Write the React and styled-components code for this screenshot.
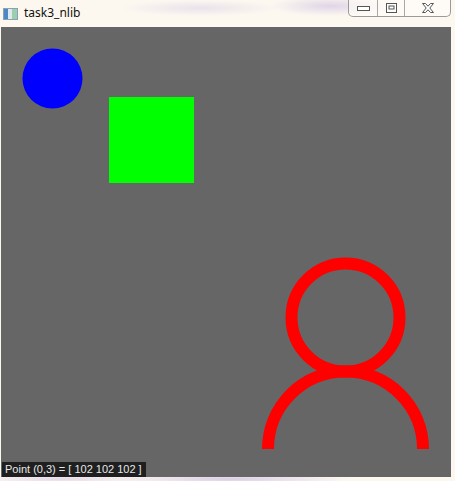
import React from "react";
import styled, { createGlobalStyle } from "styled-components";

const Global = createGlobalStyle`
  html, body { margin: 0; padding: 0; background: #fbf7ef; }
  body { width: 455px; height: 481px; overflow: hidden; }
`;

const Window = styled.div`
  width: 455px;
  height: 481px;
  display: flex;
  flex-direction: column;
  background:
    radial-gradient(ellipse 60px 10px at 330px 6px, rgba(190,170,220,0.45), transparent),
    radial-gradient(ellipse 80px 8px at 200px 8px, rgba(200,185,225,0.35), transparent),
    radial-gradient(ellipse 120px 6px at 230px 479px, rgba(190,170,220,0.55), transparent),
    radial-gradient(ellipse 90px 5px at 60px 479px, rgba(200,180,225,0.45), transparent),
    #fcf8f0;
  font-family: "Noto Sans", "Open Sans", sans-serif;
`;

const TitleBar = styled.div`
  height: 27px;
  display: flex;
  align-items: flex-start;
  position: relative;
`;

const AppIcon = styled.div`
  margin: 8px 0 0 3px;
  width: 13px;
  height: 10px;
  border: 1px solid #8aa0b4;
  background: linear-gradient(90deg, #4f86c6 0 4px, #dfe9f0 4px 8px, #9ccfb0 8px);
`;

const Title = styled.span`
  margin: 5px 0 0 6px;
  font-size: 12px;
  line-height: 16px;
  color: #111;
`;

const Caption = styled.div`
  position: absolute;
  top: 0;
  left: 348px;
  width: 101px;
  height: 16px;
  display: flex;
  border: 1px solid #9a9a9a;
  border-top: none;
  border-radius: 0 0 5px 5px;
  background: rgba(255, 252, 248, 0.6);
  overflow: hidden;
`;

const CapBtn = styled.div`
  width: ${(p) => p.$w}px;
  height: 16px;
  display: flex;
  align-items: center;
  justify-content: center;
  border-left: ${(p) => (p.$first ? "none" : "1px solid #a8a8a8")};
`;

const Body = styled.div`
  display: flex;
  padding-left: 1px;
`;

const Canvas = styled.div`
  position: relative;
  width: 450px;
  height: 450px;
  background: #666666;
`;

const Status = styled.div`
  position: absolute;
  left: 1px;
  bottom: 0;
  height: 15px;
  padding: 0 4px 0 3px;
  background: #1f1f1f;
  color: #e8e8e8;
  font-family: "Liberation Sans", Arial, sans-serif;
  font-size: 11px;
  line-height: 15px;
  white-space: nowrap;
`;

export default function App() {
  return (
    <>
      <Global />
      <Window>
        <TitleBar>
          <AppIcon />
          <Title>task3_nlib</Title>
          <Caption>
            <CapBtn $w={28} $first>
              <svg width="13" height="5" viewBox="0 0 13 5">
                <rect x="0.5" y="0.5" width="12" height="4" fill="#fff" stroke="#555" />
              </svg>
            </CapBtn>
            <CapBtn $w={26}>
              <svg width="11" height="10" viewBox="0 0 11 10">
                <rect x="0.5" y="0.5" width="10" height="9" fill="#fff" stroke="#555" />
                <rect x="3" y="3" width="5" height="3" fill="none" stroke="#555" />
              </svg>
            </CapBtn>
            <CapBtn $w={45}>
              <svg width="12" height="10" viewBox="0 0 12 10">
                <path
                  d="M0.5 0.5 H3.5 L6 3.2 L8.5 0.5 H11.5 L7.8 5 L11.5 9.5 H8.5 L6 6.8 L3.5 9.5 H0.5 L4.2 5 Z"
                  fill="#fff"
                  stroke="#555"
                  strokeWidth="1"
                  strokeLinejoin="round"
                />
              </svg>
            </CapBtn>
          </Caption>
        </TitleBar>
        <Body>
          <Canvas>
            <svg width="450" height="450" viewBox="0 0 450 450" style={{ display: "block" }}>
              <circle cx="51.5" cy="51.5" r="30" fill="#0000ff" />
              <rect x="108" y="70" width="85" height="86" fill="#00ff00" />
              <circle cx="344.5" cy="290.5" r="54" fill="none" stroke="#ff0000" strokeWidth="12" />
              <path
                d="M 267 422 A 77.5 77.5 0 0 1 422 422"
                fill="none"
                stroke="#ff0000"
                strokeWidth="12"
              />
            </svg>
            <Status>Point (0,3) = [ 102 102 102 ]</Status>
          </Canvas>
        </Body>
      </Window>
    </>
  );
}
